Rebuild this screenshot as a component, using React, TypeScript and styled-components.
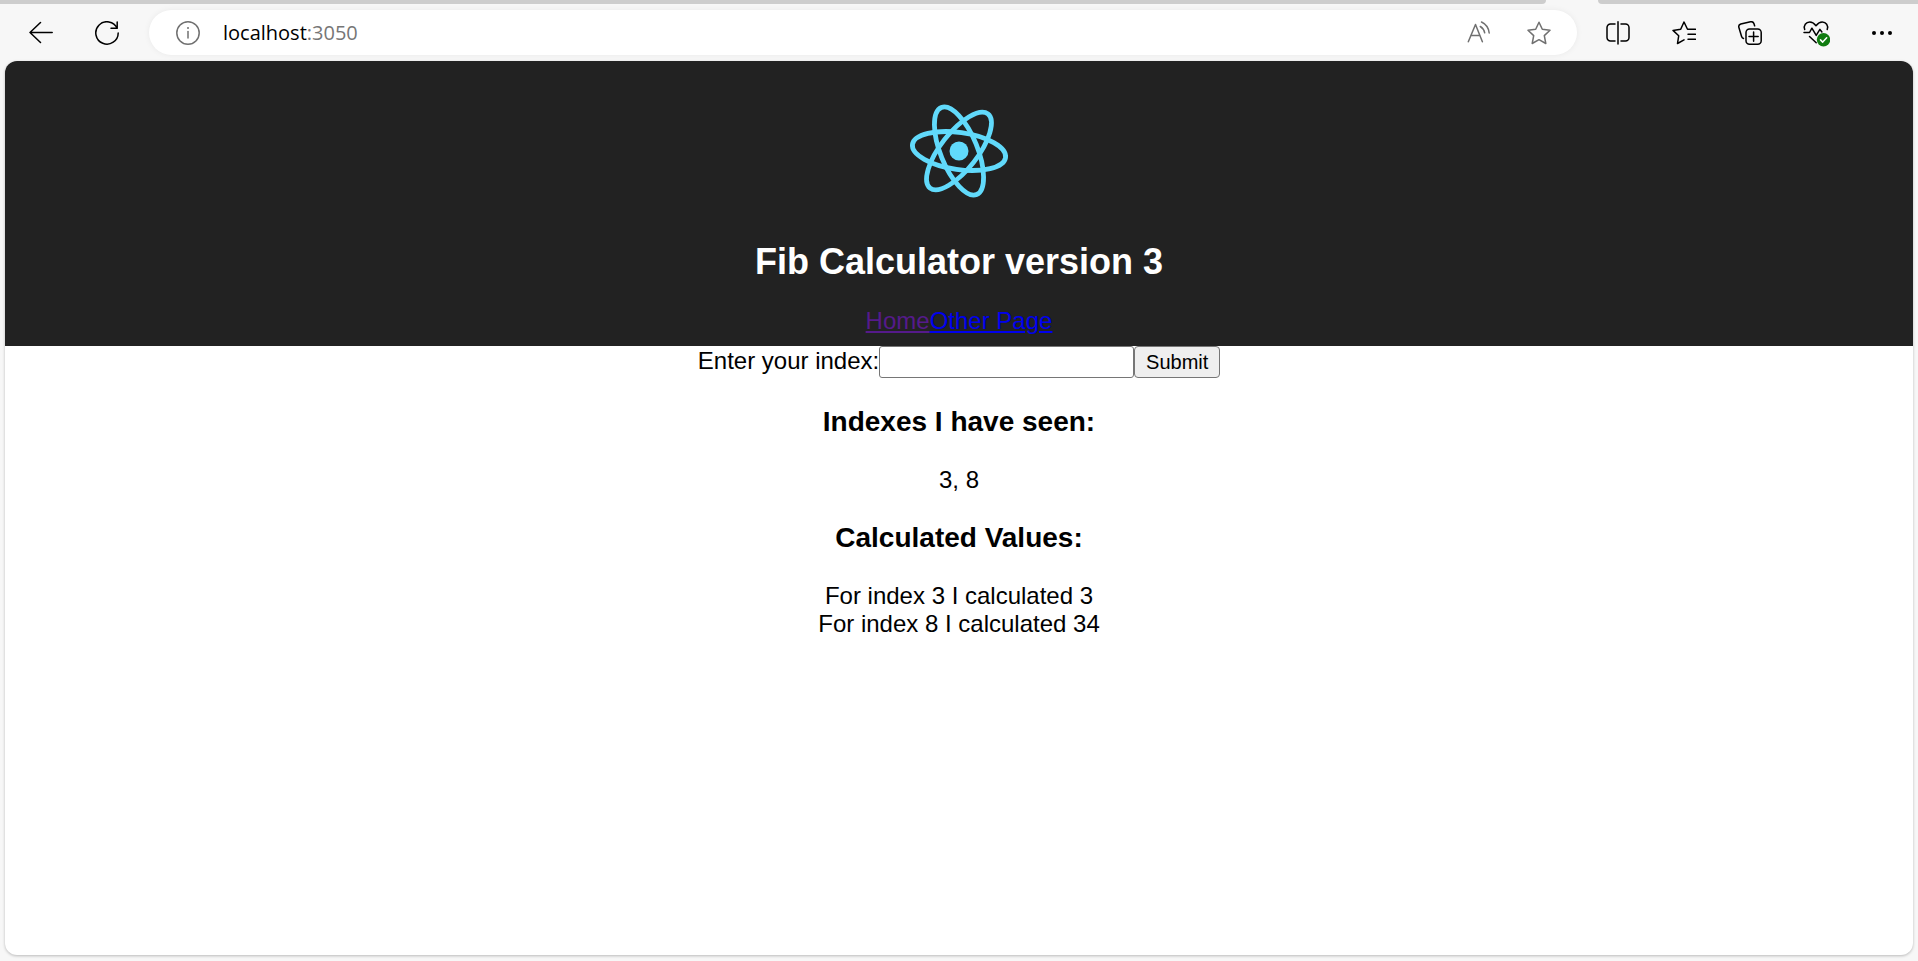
import React from "react";
import styled, { createGlobalStyle } from "styled-components";

const GlobalStyle = createGlobalStyle`
  * { box-sizing: border-box; }
  body {
    margin: 0;
    background: #f7f7f7;
    color: #000;
    font-family: "Liberation Sans", Arial, sans-serif;
  }
`;

const Browser = styled.div`
  display: flex;
  flex-direction: column;
  min-height: 100vh;
`;

const TabStrip = styled.div`
  display: flex;
  gap: 52px;
  height: 4px;
`;

const TabSegment = styled.div<{ $side: "left" | "right" }>`
  flex: ${({ $side }) => ($side === "left" ? "1" : "0 1 320px")};
  background: #cdcdcd;
  border-radius: ${({ $side }) => ($side === "left" ? "0 0 6px 0" : "0 0 0 6px")};
`;

const Toolbar = styled.nav`
  display: flex;
  align-items: center;
  height: 57px;
  padding: 0 3px 0 8px;
`;

const ToolButton = styled.button`
  display: flex;
  align-items: center;
  justify-content: center;
  flex: none;
  width: 66px;
  height: 44px;
  padding: 0;
  border: 0;
  background: none;
  color: #000;
`;

const AddressBar = styled.div`
  display: flex;
  align-items: center;
  flex: 1;
  min-width: 0;
  height: 45px;
  margin: 0 8px 0 9px;
  padding: 0 8px 0 22px;
  border-radius: 23px;
  background: #fff;
  box-shadow: 0 0 6px rgba(0, 0, 0, 0.06);
`;

const AddressButton = styled(ToolButton)<{ $width: number }>`
  width: ${({ $width }) => $width}px;
  color: #707070;
`;

const Address = styled.div`
  flex: 1;
  padding-left: 18px;
  font: 20px/28px "Open Sans", "Segoe UI", sans-serif;
  color: #000;
  outline: none;
`;

const Port = styled.span`
  color: #767676;
`;

const Page = styled.div`
  flex: 1;
  margin: 0 5px 6px;
  border-radius: 12px;
  overflow: hidden;
  background: #fff;
  box-shadow: 0 1px 3px rgba(0, 0, 0, 0.25);
  font-size: 24px;
  line-height: 28px;
  text-align: center;
`;

const Header = styled.header`
  height: 285px;
  padding-top: 30px;
  background: #222;
  color: #fff;
`;

const Logo = styled.svg`
  display: block;
  margin: 0 auto;
`;

const Title = styled.h1`
  margin: 30px 0 24px;
  font-size: 36px;
  line-height: 42px;
`;

const PageLink = styled.a<{ $visited?: boolean }>`
  color: ${({ $visited }) => ($visited ? "#551a8b" : "#0000ee")};
`;

const IndexForm = styled.form`
  display: flex;
  justify-content: center;
  height: 32px;
  line-height: 30px;
`;

const IndexInput = styled.input`
  width: 255px;
  padding: 2px 3px;
  border: 1px solid #767676;
  border-radius: 3px;
  background: #fff;
  font: 20px "Liberation Sans", Arial, sans-serif;
`;

const SubmitButton = styled.button`
  width: 86px;
  padding: 0;
  border: 1px solid #767676;
  border-radius: 4px;
  background: #efefef;
  color: #000;
  font: 20px "Liberation Sans", Arial, sans-serif;
`;

const SectionTitle = styled.h3`
  margin: 28px 0;
  font-size: 28px;
  line-height: 32px;
`;

const Icon = ({ children, size = 24 }: { children: React.ReactNode; size?: number }) => (
  <svg
    width={size}
    height={size}
    viewBox={`0 0 ${size} ${size}`}
    fill="none"
    stroke="currentColor"
    strokeWidth="1.5"
    strokeLinecap="round"
    strokeLinejoin="round"
    aria-hidden="true"
  >
    {children}
  </svg>
);

const BackIcon = () => (
  <Icon>
    <path d="M23.2 11.5H1M11.5 1.5L1 11.5l10.500 10" />
  </Icon>
);

const ReloadIcon = () => (
  <Icon>
    <path d="M22.200 1V7.300H16M22.200 7.300A11.200 11.200 0 1 0 23.200 12" />
  </Icon>
);

const InfoIcon = () => (
  <Icon>
    <circle cx="12" cy="12" r="11.200" />
    <path d="M12 10.500V17" />
    <circle cx="12" cy="7" r="1" fill="currentColor" stroke="none" />
  </Icon>
);

const ReadAloudIcon = () => (
  <Icon>
    <path d="M1.300 20.700L8.500 3.500l6.900 17.200M3.800 14.500h9.200M13.300 5.500c2.300 1.400 3.900 3.500 4.400 6.300M14.500 1c4.200 2 7.200 6 7.700 11" />
  </Icon>
);

const StarIcon = () => (
  <Icon>
    <path d="M12 1.200l3.300 7.100 7.700 1-5.700 5.300 1.500 7.900L12 18.700l-6.800 3.800 1.500-7.900L1 9.300l7.700-1z" />
  </Icon>
);

const SplitIcon = () => (
  <Icon>
    <path d="M9 3H4.500A3.500 3.500 0 0 0 1 6.500v10A3.500 3.500 0 0 0 4.500 20H9M15 3h4.500A3.500 3.500 0 0 1 23 6.500v10a3.500 3.500 0 0 1-3.500 3.500H15M12 .800V23" />
  </Icon>
);

const FavoritesIcon = () => (
  <Icon>
    <path d="M23.500 8.300h-8L12 1 8.700 8.300 1 9.400l5.700 5.400-1.200 7.700 6.500-3.600M16 13.300h7.500M16 18.300h7.500" />
  </Icon>
);

const CollectionsIcon = () => (
  <Icon>
    <path d="M5.500 17.500c-1-.4-1.600-1-1.900-2L.9 6.500C.4 4.800 1.200 3.600 2.800 3l9.700-2.200c1.800-.4 3 .4 3.500 2l.6 2" />
    <rect x="8" y="8" width="15.200" height="15.200" rx="3.500" />
    <path d="M15.600 11v9.200M11 15.600h9.200" />
  </Icon>
);

const HealthIcon = () => (
  <Icon size={28}>
    <path d="M2.700 10.500C1.200 6.500 4 3 7.800 3c2.600 0 4.200 1.200 6.200 3.700C16 4.200 17.600 3 20.200 3c3.800 0 6.500 3.500 5 7.500M2 13.500h5.500l2.400-4.300 4.300 7.200 3.700-6 2 2.600M7.500 17.500l6.700 6.300" />
    <circle cx="21.500" cy="20.800" r="6.700" fill="#107c10" stroke="none" />
    <path d="M18.500 20.900l2.200 2.200 4-4.300" stroke="#fff" />
  </Icon>
);

const MoreIcon = () => (
  <Icon>
    {[4, 12, 20].map((x) => (
      <circle key={x} cx={x} cy="12" r="2" fill="currentColor" stroke="none" />
    ))}
  </Icon>
);

const ReactLogo = () => (
  <Logo width="120" height="120" viewBox="-60 -60 120 120" role="img" aria-label="logo">
    <circle r="9.500" fill="#61dafb" />
    <g fill="none" stroke="#61dafb" strokeWidth="4.800">
      {[8, 68, 128].map((angle) => (
        <ellipse key={angle} rx="47" ry="18.500" transform={`rotate(${angle})`} />
      ))}
    </g>
  </Logo>
);

const tools = [
  { label: "Split screen", icon: <SplitIcon /> },
  { label: "Favorites", icon: <FavoritesIcon /> },
  { label: "Collections", icon: <CollectionsIcon /> },
  { label: "Browser essentials", icon: <HealthIcon /> },
  { label: "Settings and more", icon: <MoreIcon /> },
];

const seenIndexes = [3, 8];
const values = [
  { index: 3, value: 3 },
  { index: 8, value: 34 },
];

export default function App() {
  return (
    <Browser>
      <GlobalStyle />
      <TabStrip>
        <TabSegment $side="left" />
        <TabSegment $side="right" />
      </TabStrip>
      <Toolbar aria-label="Browser toolbar">
        <ToolButton aria-label="Back"><BackIcon /></ToolButton>
        <ToolButton aria-label="Refresh"><ReloadIcon /></ToolButton>
        <AddressBar>
          <AddressButton $width={34} aria-label="Site information"><InfoIcon /></AddressButton>
          <Address
            role="textbox"
            aria-label="Address"
            contentEditable
            suppressContentEditableWarning
            spellCheck={false}
          >
            localhost<Port>:3050</Port>
          </Address>
          <AddressButton $width={60} aria-label="Read aloud"><ReadAloudIcon /></AddressButton>
          <AddressButton $width={60} aria-label="Add to favorites"><StarIcon /></AddressButton>
        </AddressBar>
        {tools.map(({ label, icon }) => (
          <ToolButton key={label} aria-label={label}>{icon}</ToolButton>
        ))}
      </Toolbar>
      <Page>
        <Header>
          <ReactLogo />
          <Title>Fib Calculator version 3</Title>
          <PageLink href="#home" $visited>Home</PageLink>
          <PageLink href="#otherpage">Other Page</PageLink>
        </Header>
        <main>
          <IndexForm onSubmit={(event) => event.preventDefault()}>
            <label htmlFor="index">Enter your index:</label>
            <IndexInput id="index" type="text" />
            <SubmitButton type="submit">Submit</SubmitButton>
          </IndexForm>
          <SectionTitle>Indexes I have seen:</SectionTitle>
          {seenIndexes.join(", ")}
          <SectionTitle>Calculated Values:</SectionTitle>
          {values.map(({ index, value }) => (
            <div key={index}>
              For index {index} I calculated {value}
            </div>
          ))}
        </main>
      </Page>
    </Browser>
  );
}
